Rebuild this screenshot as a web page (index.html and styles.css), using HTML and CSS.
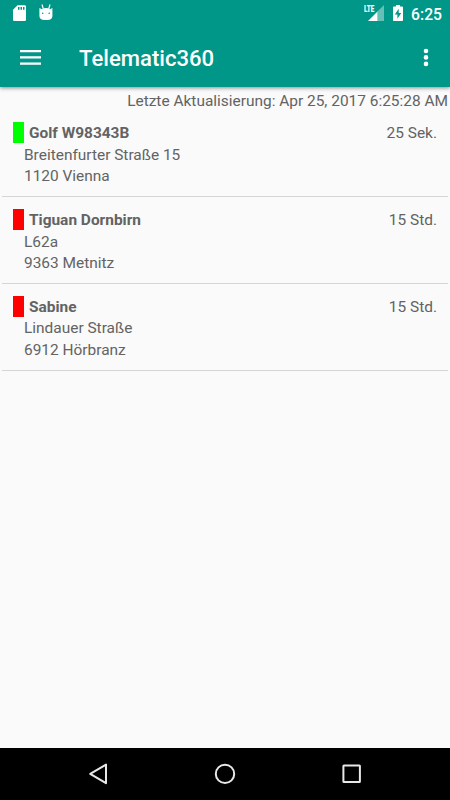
FILE: index.html
```html
<!DOCTYPE html>
<html lang="de">
<head>
    <meta charset="utf-8">
    <title>Telematic360</title>
    <meta name="viewport" content="width=device-width, initial-scale=1">
    <link rel="stylesheet" href="styles.css">
</head>
<body>
    <header class="app-bar">
        <div class="status-bar">
            <svg class="icon-sd" width="13" height="17" viewBox="0 0 13 17">
                <path fill="#fff" fill-rule="evenodd" d="M4.5 .2H11.7Q13 .2 13 1.5V14.7Q13 16 11.7 16H1.3Q0 16 0 14.7V4.8ZM5 2V4.8H6.5V2ZM7.5 2V4.8H9V2ZM10 2V4.8H11.5V2Z"/>
            </svg>
            <svg class="icon-droid" width="14" height="17" viewBox="0 0 14 17">
                <path fill="none" stroke="#fff" stroke-width="1.2" d="M3 -.5L4.3 4M11 -.5L9.7 4"/>
                <path fill="#fff" d="M.4 3L3 4.2Q7 1.8 11 4.2L13.4 3V11Q13.2 15 8.5 15H5.5Q.6 15 .4 11Z"/>
                <circle cx="3.7" cy="8.2" r=".8" fill="#009688"/>
                <circle cx="10.2" cy="8.2" r=".8" fill="#009688"/>
            </svg>
            <div class="status-right">
                <span class="lte">LTE</span>
                <svg class="icon-signal" width="16" height="16" viewBox="0 0 16 16">
                    <path fill="#66c0b8" d="M16 0V16H9.5V6.5Z"/>
                    <path fill="#fff" d="M9.5 6.5V16H0Z"/>
                </svg>
                <svg class="icon-battery" width="10" height="16" viewBox="0 0 10 16">
                    <path fill="#fff" d="M3 0H7V1.6H9.2Q10 1.6 10 2.4V15.2Q10 16 9.2 16H.8Q0 16 0 15.2V2.4Q0 1.6 .8 1.6H3Z"/>
                    <path fill="#009688" d="M5.7 3.8L1.8 9.5H4.4V13.7L8.3 8H5.7Z"/>
                </svg>
                <span class="clock">6:25</span>
            </div>
        </div>
        <div class="toolbar">
            <svg class="icon-menu" width="21" height="15" viewBox="0 0 21 15">
                <path fill="#fff" d="M0 0H21V2.3H0ZM0 6.2H21V8.5H0ZM0 12.4H21V14.7H0Z"/>
            </svg>
            <h1>Telematic360</h1>
            <svg class="icon-more" width="6" height="19" viewBox="0 0 6 19">
                <g fill="#fff">
                    <circle cx="3" cy="3" r="2.3"/>
                    <circle cx="3" cy="9.4" r="2.3"/>
                    <circle cx="3" cy="15.9" r="2.3"/>
                </g>
            </svg>
        </div>
    </header>

    <main>
        <p class="updated">Letzte Aktualisierung: Apr 25, 2017 6:25:28 AM</p>
        <ul class="vehicles">
            <li class="vehicle">
                <div class="vehicle-head">
                    <span class="marker online"></span>
                    <strong>Golf W98343B</strong>
                    <span class="age">25 Sek.</span>
                </div>
                <p>Breitenfurter Straße 15</p>
                <p>1120 Vienna</p>
            </li>
            <li class="vehicle">
                <div class="vehicle-head">
                    <span class="marker"></span>
                    <strong>Tiguan Dornbirn</strong>
                    <span class="age">15 Std.</span>
                </div>
                <p>L62a</p>
                <p>9363 Metnitz</p>
            </li>
            <li class="vehicle">
                <div class="vehicle-head">
                    <span class="marker"></span>
                    <strong>Sabine</strong>
                    <span class="age">15 Std.</span>
                </div>
                <p>Lindauer Straße</p>
                <p>6912 Hörbranz</p>
            </li>
        </ul>
    </main>

    <nav class="nav-bar">
        <svg width="22" height="22" viewBox="0 0 22 22">
            <path fill="none" stroke="#e8e8e8" stroke-width="2" stroke-linejoin="round" d="M18 1.6V20.2L2.2 10.9Z"/>
        </svg>
        <svg width="22" height="22" viewBox="0 0 22 22">
            <circle cx="11" cy="10.9" r="9.2" fill="none" stroke="#e8e8e8" stroke-width="2"/>
        </svg>
        <svg width="22" height="22" viewBox="0 0 22 22">
            <rect x="3.4" y="2.5" width="16.5" height="16.5" rx=".5" fill="none" stroke="#e8e8e8" stroke-width="2"/>
        </svg>
    </nav>
</body>
</html>
```
FILE: styles.css
```css
* {
    box-sizing: border-box;
}
body {
    margin: 0;
    height: 100vh;
    display: flex;
    flex-direction: column;
    background-color: #fafafa;
    color: #636363;
    font-family: Roboto, "Liberation Sans", sans-serif;
    font-size: 15.45px;
    line-height: 21.3px;
    overflow: hidden;
}
h1, p, ul {
    margin: 0;
    padding: 0;
}
svg {
    display: block;
    flex: none;
}
.app-bar {
    height: 87px;
    background-color: #009688;
    color: #fff;
    box-shadow: 0 1px 4px rgba(0, 0, 0, 0.45);
}
.status-bar {
    display: flex;
    height: 28px;
    padding: 5px 9px 0 13px;
}
.icon-droid {
    margin-left: 13px;
    overflow: visible;
}
.status-right {
    display: flex;
    margin-left: auto;
}
.lte {
    width: 11px;
    margin-right: -7px;
    font-size: 9px;
    font-weight: 900;
    line-height: 9px;
    transform: scaleX(0.7);
    transform-origin: left;
}
.icon-battery {
    margin: 0 8px 0 9px;
}
.clock {
    margin-right: -1px;
    font-size: 15.7px;
    font-weight: 500;
    line-height: 19px;
}
.toolbar {
    display: flex;
    align-items: center;
    height: 58px;
    padding: 0 21px 0 20px;
}
h1 {
    margin: 2px 0 0 38px;
    font-size: 22.1px;
    font-weight: 500;
    line-height: 30px;
}
.icon-more {
    margin-left: auto;
}
main {
    flex: 1;
    padding: 4px 2px 0;
}
.updated {
    height: 19.3px;
    text-align: right;
}
.vehicles {
    list-style: none;
}
.vehicle {
    height: 86.8px;
    padding: 12.8px 11px 0;
    border-bottom: 1px solid #d5d5d5;
}
.vehicle-head {
    display: flex;
    height: 21.7px;
}
.marker {
    width: 11px;
    height: 21px;
    margin: -1px 5px 0 0;
    background-color: #f00;
}
.marker.online {
    background-color: #0f0;
}
.age {
    margin-left: auto;
}
.vehicle p {
    padding-left: 11px;
}
.nav-bar {
    display: flex;
    justify-content: space-between;
    height: 52px;
    padding: 15px 88px 0;
    background-color: #000;
}
```
